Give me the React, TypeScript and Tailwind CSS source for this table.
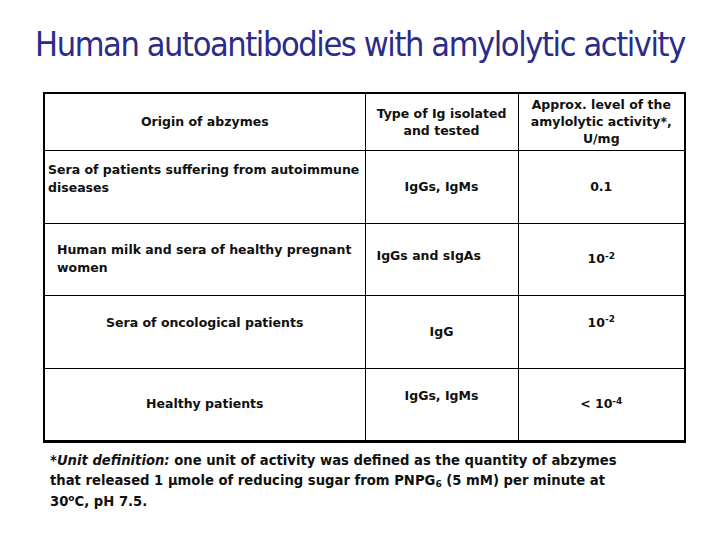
export default function App() {
  const cell = 'border border-black p-0';
  return (
    <div className="w-[720px] h-[540px] bg-white relative overflow-hidden" style={{ fontFamily: '"DejaVu Sans", Verdana, sans-serif' }}>
      <h1
        className="pt-[24px] h-[92px] text-center text-[34px] leading-[40px] text-[#2b2b8a] tracking-[-1.4px]"
        style={{ fontFamily: '"DejaVu Sans Condensed", "Liberation Sans Narrow", "Liberation Sans", sans-serif' }}
      >
        Human autoantibodies with amylolytic activity
      </h1>

      <table className="ml-[43px] w-[641px] table-fixed border-collapse border-2 border-b-[3px] border-black text-[12.5px] font-bold text-[#111] leading-[18px]">
        <colgroup>
          <col className="w-[321px]" />
          <col className="w-[153px]" />
          <col className="w-[167px]" />
        </colgroup>
        <tbody>
          <tr className="h-[57px]">
            <td className={`${cell} text-center align-middle`}>Origin of abzymes</td>
            <td className={`${cell} text-center align-middle leading-[17px]`}>
              Type of Ig isolated
              <br />
              and tested
            </td>
            <td className={`${cell} text-center align-middle leading-[17px]`}>
              Approx. level of the
              <br />
              amylolytic activity*,
              <br />
              U/mg
            </td>
          </tr>
          <tr className="h-[73px]">
            <td className={`${cell} align-top pt-[10px] pl-[3px]`}>
              Sera of patients suffering from autoimmune
              <br />
              diseases
            </td>
            <td className={`${cell} text-center align-middle`}>IgGs, IgMs</td>
            <td className={`${cell} text-center align-middle`}>0.1</td>
          </tr>
          <tr className="h-[72px]">
            <td className={`${cell} align-middle pl-[12px]`}>
              Human milk and sera of healthy pregnant
              <br />
              women
            </td>
            <td className={`${cell} align-middle pl-[11px] pb-[6px]`}>IgGs and sIgAs</td>
            <td className={`${cell} text-center align-middle`}>
              10<sup className="text-[9px] leading-none">-2</sup>
            </td>
          </tr>
          <tr className="h-[73px]">
            <td className={`${cell} text-center align-top pt-[18px]`}>Sera of oncological patients</td>
            <td className={`${cell} text-center align-middle`}>IgG</td>
            <td className={`${cell} text-center align-top pt-[18px]`}>
              10<sup className="text-[9px] leading-none">-2</sup>
            </td>
          </tr>
          <tr className="h-[73px]">
            <td className={`${cell} text-center align-middle`}>Healthy patients</td>
            <td className={`${cell} text-center align-top pt-[18px]`}>IgGs, IgMs</td>
            <td className={`${cell} text-center align-middle`}>
              &lt; 10<sup className="text-[9px] leading-none">-4</sup>
            </td>
          </tr>
        </tbody>
      </table>

      <p className="ml-[50px] mt-[8px] w-[585px] text-[13.2px] font-bold leading-[20.5px] text-[#111]">
        <span className="italic">*Unit definition:</span> one unit of activity was defined as the quantity of abzymes
        that released 1 µmole of reducing sugar from PNPG<sub className="text-[9px] leading-none">6</sub> (5 mM) per minute at
        30<sup className="text-[9px] leading-none">o</sup>C, pH 7.5.
      </p>
    </div>
  );
}
